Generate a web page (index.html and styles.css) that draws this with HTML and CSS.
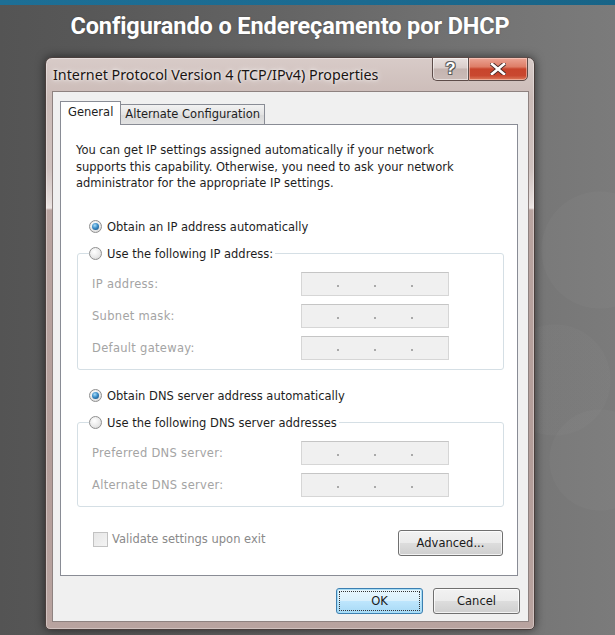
FILE: index.html
```html
<!DOCTYPE html>
<html>
<head>
<meta charset="utf-8">
<link rel="stylesheet" href="styles.css">
</head>
<body>
<div class="topbar"></div>
<div class="stage">
  <h1 class="heading">Configurando o Endereçamento por DHCP</h1>
  <div class="window">
    <div class="titlebar">
      <span class="title">Internet Protocol Version 4 (TCP/IPv4) Properties</span>
      <div class="caption-btns">
        <div class="cbtn help">?</div>
        <div class="cbtn close">
          <svg width="16" height="12" viewBox="0 0 16 12"><path d="M2 1 L14 11 M14 1 L2 11" stroke="#4a2a26" stroke-width="4.4" stroke-linecap="square"/><path d="M2 1 L14 11 M14 1 L2 11" stroke="#ffffff" stroke-width="2.6" stroke-linecap="square"/></svg>
        </div>
      </div>
    </div>
    <div class="client">
      <div class="tabs">
        <div class="tab active">General</div>
        <div class="tab">Alternate Configuration</div>
      </div>
      <div class="panel">
        <p class="intro">You can get IP settings assigned automatically if your network supports this capability. Otherwise, you need to ask your network administrator for the appropriate IP settings.</p>
        <div class="radio-row first"><span class="radio checked"></span>Obtain an IP address automatically</div>
        <fieldset class="group">
          <legend class="radio-row"><span class="radio"></span>Use the following IP address:</legend>
          <div class="field"><span class="label">IP address:</span><span class="ipbox"><i></i><i></i><i></i></span></div>
          <div class="field"><span class="label">Subnet mask:</span><span class="ipbox"><i></i><i></i><i></i></span></div>
          <div class="field"><span class="label">Default gateway:</span><span class="ipbox"><i></i><i></i><i></i></span></div>
        </fieldset>
        <div class="radio-row second"><span class="radio checked"></span>Obtain DNS server address automatically</div>
        <fieldset class="group">
          <legend class="radio-row"><span class="radio"></span>Use the following DNS server addresses</legend>
          <div class="field"><span class="label">Preferred DNS server:</span><span class="ipbox"><i></i><i></i><i></i></span></div>
          <div class="field"><span class="label">Alternate DNS server:</span><span class="ipbox"><i></i><i></i><i></i></span></div>
        </fieldset>
        <div class="bottom-row">
          <div class="check-row"><span class="checkbox"></span>Validate settings upon exit</div>
          <button class="btn advanced">Advanced...</button>
        </div>
      </div>
      <div class="footer">
        <button class="btn ok"><span class="focus">OK</span></button>
        <button class="btn">Cancel</button>
      </div>
    </div>
  </div>
</div>
</body>
</html>
```
FILE: styles.css
```css
* { box-sizing: border-box; }

body {
  margin: 0;
  width: 615px;
  height: 635px;
  overflow: hidden;
  font-family: "DejaVu Sans", sans-serif;
  background:
    radial-gradient(circle at 600px 250px, rgba(255,255,255,0.025) 0 58px, transparent 59px),
    radial-gradient(circle at 555px 380px, rgba(255,255,255,0.02) 0 55px, transparent 56px),
    radial-gradient(circle at 600px 460px, rgba(255,255,255,0.025) 0 50px, transparent 51px),
    linear-gradient(to right, #545454 0%, #585858 15%, #646464 45%, #727272 75%, #7b7b7b 100%);
}

.topbar {
  height: 5px;
  background: linear-gradient(to right, #1d6f96, #1b6a90 60%, #186487);
}

.stage {
  width: 580px;
}

.heading {
  margin: 7px 0 0 0;
  height: 45px;
  line-height: 28px;
  text-align: center;
  font-family: Roboto, "Liberation Sans", sans-serif;
  font-weight: 700;
  font-size: 23.5px;
  letter-spacing: -0.1px;
  color: #ffffff;
  text-shadow: 0 0 2px rgba(0,0,0,0.25);
}

.window {
  margin-left: 45px;
  width: 490px;
  height: 573px;
  border: 1px solid #4a3f3d;
  border-radius: 7px 7px 5px 5px;
  background: linear-gradient(to bottom, #d8cbc8 0px, #cbbbb7 40px, #cfc1be 110px, #e6dedc 145px, #ede6e4 150px, #b9a4a0 152px, #b39d99 400px, #b8a39f 100%);
  box-shadow: 0 0 10px rgba(0,0,0,0.55), inset 0 0 0 1px rgba(255,255,255,0.35);
  display: flex;
  flex-direction: column;
}

.titlebar {
  height: 33px;
  display: flex;
  justify-content: space-between;
  align-items: flex-start;
  padding: 0 6px 0 7px;
}

.title {
  margin-top: 7px;
  font-family: "Noto Sans", "DejaVu Sans", sans-serif;
  font-size: 14.3px;
  color: #1a1412;
  text-shadow: 0 0 6px rgba(255,255,255,0.9), 0 0 3px rgba(255,255,255,0.8);
}

.caption-btns {
  display: flex;
  margin-top: -1px;
}

.cbtn {
  height: 24px;
  border: 1px solid #5d4c49;
  display: flex;
  align-items: center;
  justify-content: center;
}

.help {
  width: 36px;
  border-radius: 0 0 0 5px;
  border-right: none;
  background: linear-gradient(to bottom, #e9e1df 0%, #d9cdca 45%, #c4b4b0 50%, #cbbcb8 100%);
  box-shadow: inset 0 0 0 1px rgba(255,255,255,0.5);
  font-family: "Liberation Sans", sans-serif;
  font-weight: 700;
  font-size: 17px;
  color: #ffffff;
  text-shadow: 0 0 1px #3a3a3a, 1px 1px 0 #5a5a5a, -1px -1px 0 #6a6a6a, 1px -1px 0 #6a6a6a, -1px 1px 0 #6a6a6a;
}

.close {
  width: 60px;
  border-radius: 0 0 5px 0;
  background: linear-gradient(to bottom, #eca494 0%, #de7d67 40%, #c8442c 50%, #c9472f 80%, #dc7a5c 100%);
  box-shadow: inset 0 0 0 1px rgba(255,220,210,0.5);
}

.client {
  flex: 1;
  margin: 0 5px 7px 6px;
  background: #f0f0f0;
  border: 1px solid #8e8280;
  padding: 9px 8px 0 7px;
  font-size: 11.5px;
  color: #1e1e1e;
}

.tabs {
  display: flex;
  align-items: flex-end;
  height: 23px;
  position: relative;
  z-index: 1;
}

.tab {
  height: 20px;
  padding: 0 4px 0 4px;
  border: 1px solid #898c95;
  border-bottom: none;
  background: linear-gradient(to bottom, #f2f2f2, #e3e3e3 50%, #d9d9d9 51%, #e2e2e2);
  line-height: 19px;
  white-space: nowrap;
}

.tab + .tab {
  border-left: none;
}

.tab.active {
  height: 24px;
  margin-bottom: -1px;
  padding: 0 7px 0 7px;
  background: #ffffff;
  line-height: 20px;
}

.panel {
  height: 452px;
  margin-right: 2px;
  background: #ffffff;
  border: 1px solid #898c95;
  padding: 17px 13px 0 15px;
}

.intro {
  margin: 0;
  line-height: 16.5px;
  padding-right: 40px;
}

.radio-row {
  display: flex;
  align-items: center;
  height: 18px;
  white-space: nowrap;
}

.radio-row.first {
  margin-top: 26px;
  padding-left: 13px;
}

.radio-row.second {
  margin-top: 17px;
  padding-left: 13px;
}

.radio {
  width: 13px;
  height: 13px;
  margin-right: 5px;
  border-radius: 50%;
  border: 1px solid #8f8f8f;
  background: radial-gradient(circle at 40% 35%, #ffffff 0%, #e9e9e9 55%, #cfcfcf 100%);
  flex: none;
  position: relative;
}

.radio.checked::after {
  content: "";
  position: absolute;
  left: 2px;
  top: 2px;
  width: 7px;
  height: 7px;
  border-radius: 50%;
  background: radial-gradient(circle at 40% 35%, #a9dcf8 0%, #3b8dc8 45%, #0e3f6e 100%);
}

.group {
  margin: 9px 0 0 1px;
  padding: 9px 0 9px 14px;
  border: 1px solid #d5dfe5;
  border-radius: 3px;
  min-width: 0;
}

.group legend {
  margin-left: -3px;
  padding: 0 2px 0 0;
}

.field {
  display: flex;
  align-items: center;
  height: 24px;
}

.field + .field {
  margin-top: 8px;
}

.label {
  width: 209px;
  color: #a4a4a4;
  letter-spacing: 0.3px;
  white-space: nowrap;
}

.ipbox {
  width: 148px;
  height: 24px;
  border: 1px solid #d6d6d6;
  border-top-color: #c5c5c5;
  background: #f0f0f0;
  display: flex;
  justify-content: space-around;
  align-items: center;
  padding: 4px 18px 0 18px;
}

.ipbox i {
  width: 2px;
  height: 2px;
  background: #a9a9a9;
  display: block;
}

.bottom-row {
  margin-top: 23px;
  display: flex;
  justify-content: space-between;
  align-items: flex-start;
}

.check-row {
  display: flex;
  align-items: center;
  height: 15px;
  margin-top: 2px;
  padding-left: 17px;
  color: #8a8a8a;
}

.checkbox {
  width: 15px;
  height: 15px;
  border: 1px solid #c2c2c2;
  background: linear-gradient(135deg, #e6e6e6, #f4f4f4);
  margin-right: 4px;
}

.btn {
  font-family: inherit;
  font-size: 11.5px;
  color: #1a1a1a;
  height: 26px;
  border: 1px solid #707070;
  border-radius: 3px;
  background: linear-gradient(to bottom, #f2f2f2 0%, #ebebeb 48%, #dddddd 50%, #cfcfcf 100%);
  box-shadow: inset 0 0 0 1px rgba(255,255,255,0.75);
  padding: 0;
}

.advanced {
  width: 105px;
  margin-right: 1px;
}

.footer {
  display: flex;
  justify-content: flex-end;
  gap: 10px;
  margin-top: 12px;
}

.footer .btn {
  width: 87px;
}

.btn.ok {
  border-color: #3c7fb1;
  box-shadow: inset 0 0 0 1px #a6dcf5;
  background: linear-gradient(to bottom, #eaf6fd 0%, #d9f0fc 48%, #bee6fd 50%, #a7d9f5 100%);
  padding: 2px;
}

.focus {
  display: flex;
  align-items: center;
  justify-content: center;
  height: 100%;
  border: 1px dotted #333;
}
```
